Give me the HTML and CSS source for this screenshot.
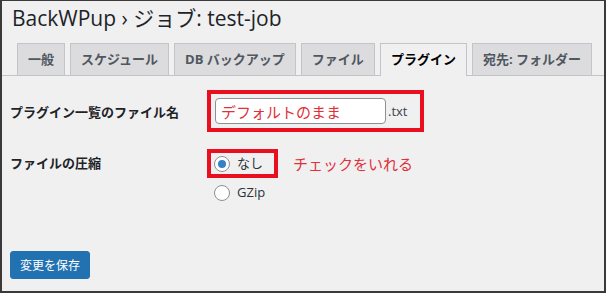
FILE: index.html
```html
<!DOCTYPE html>
<html lang="ja">

<head>
    <meta charset="UTF-8">
    <meta name="viewport" content="width=device-width, initial-scale=1.0">
    <title>BackWPup ジョブ</title>
    <link rel="stylesheet" href="styles.css">
</head>

<body>
    <div class="frame">
        <h1 class="title">BackWPup › ジョブ: test-job</h1>

        <nav class="tabs">
            <a class="tab" href="#">一般</a>
            <a class="tab" href="#">スケジュール</a>
            <a class="tab" href="#">DB バックアップ</a>
            <a class="tab" href="#">ファイル</a>
            <a class="tab active" href="#">プラグイン</a>
            <a class="tab" href="#">宛先: フォルダー</a>
        </nav>

        <div class="form">
            <div class="row row-name">
                <div class="label">プラグイン一覧のファイル名</div>
                <div class="field">
                    <span class="mark mark-name">
                        <input class="text-input" type="text" value="デフォルトのまま">
                        <span class="ext">.txt</span>
                    </span>
                </div>
            </div>

            <div class="row row-compress">
                <div class="label">ファイルの圧縮</div>
                <div class="field">
                    <div class="option-line">
                        <span class="mark mark-radio">
                            <label class="radio"><input type="radio" name="compress" checked>なし</label>
                        </span>
                        <span class="note">チェックをいれる</span>
                    </div>
                    <label class="radio plain"><input type="radio" name="compress">GZip</label>
                </div>
            </div>
        </div>

        <button class="btn">変更を保存</button>
    </div>
</body>

</html>
```

FILE: styles.css
```css
* {
    box-sizing: border-box;
}

body {
    margin: 0;
    font-family: "Open Sans", "Noto Sans CJK JP", sans-serif;
    color: #1d2327;
}

.frame {
    width: 606px;
    height: 293px;
    overflow: hidden;
    background: #f0f0f1;
    border: 2px solid #3a3a3a;
    border-top-width: 1px;
}

.title {
    margin: 0;
    padding: 2px 10px 0;
    font-size: 21px;
    font-weight: 400;
    line-height: 30px;
    color: #1d2327;
}

/* tabs */

.tabs {
    display: flex;
    align-items: flex-end;
    gap: 5px;
    margin-top: 10px;
    padding-left: 15px;
    border-bottom: 1px solid #c3c4c7;
}

.tab {
    display: block;
    height: 32px;
    padding: 0 10px;
    font-size: 13px;
    font-weight: 700;
    line-height: 30px;
    color: #50575e;
    text-decoration: none;
    background: #dcdcde;
    border: 1px solid #c3c4c7;
    border-bottom: none;
}

.tab.active {
    height: 33px;
    margin-bottom: -1px;
    color: #000;
    background: #f0f0f1;
}

/* form rows */

.row {
    display: flex;
    padding-left: 8px;
}

.label {
    width: 197px;
    font-size: 13px;
    font-weight: 700;
    color: #1d2327;
}

.row-name {
    align-items: center;
    margin-top: 14px;
}

.row-compress {
    margin-top: 17px;
}

.row-compress .label {
    line-height: 29px;
}

.mark {
    display: inline-flex;
    align-items: center;
    border: 4px solid #e8101e;
}

.mark-name {
    padding: 4px 12px 4px 4px;
}

.text-input {
    width: 171px;
    height: 26px;
    margin: 0;
    padding: 0 5px;
    font-family: "Noto Sans CJK JP", sans-serif;
    font-size: 15px;
    color: #e0303a;
    background: #fff;
    border: 1px solid #8c8f94;
    border-radius: 4px;
    outline: none;
}

.ext {
    margin-left: 2px;
    font-size: 13px;
    color: #3c434a;
}

.option-line {
    display: flex;
    align-items: center;
}

.mark-radio {
    padding: 0 11px 0 3px;
}

.radio {
    display: inline-flex;
    align-items: center;
    gap: 7px;
    font-size: 13px;
    line-height: 21px;
    color: #2c3338;
}

.radio input {
    appearance: none;
    display: grid;
    place-content: center;
    width: 16px;
    height: 16px;
    margin: 0;
    background: #fff;
    border: 1px solid #8c8f94;
    border-radius: 50%;
}

.radio input:checked::before {
    content: "";
    width: 8px;
    height: 8px;
    border-radius: 50%;
    background: #3582c4;
}

.radio.plain {
    margin-top: 4px;
    padding-left: 7px;
}

.note {
    margin-left: 15px;
    font-family: "Noto Sans CJK JP", sans-serif;
    font-size: 15px;
    color: #e0303a;
}

.btn {
    display: block;
    height: 28px;
    margin: 45px 0 0 8px;
    padding: 0 9px;
    font-family: "Noto Sans CJK JP", sans-serif;
    font-size: 12px;
    color: #fff;
    background: #2271b1;
    border: 1px solid #2271b1;
    border-radius: 3px;
    cursor: pointer;
}
```
